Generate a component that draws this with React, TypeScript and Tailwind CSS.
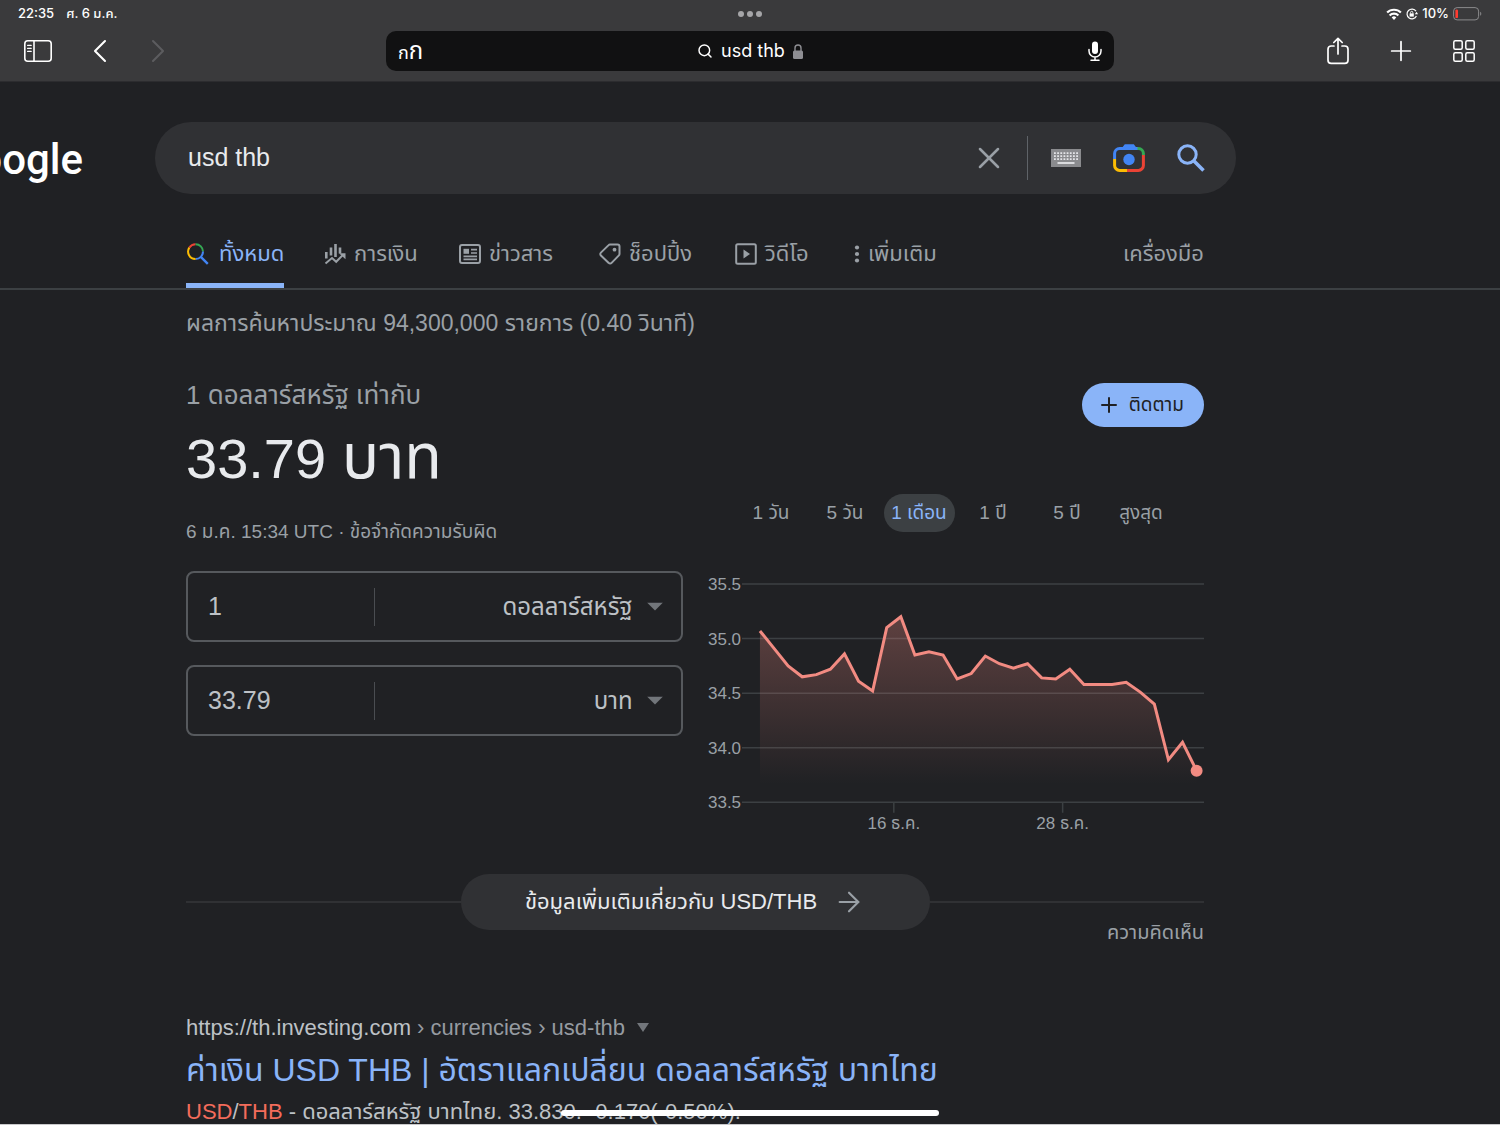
import { ArrowRight, ChevronLeft, ChevronRight, Plus, Search, X } from "lucide-react";
import type { ReactNode } from "react";

const rates = [
  35.07, 34.91, 34.75, 34.65, 34.67, 34.72, 34.86, 34.61, 34.52, 35.1, 35.2,
  34.85, 34.88, 34.85, 34.63, 34.68, 34.84, 34.77, 34.73, 34.77, 34.64, 34.63,
  34.72, 34.58, 34.58, 34.58, 34.6, 34.51, 34.4, 33.89, 34.05, 33.79,
];

const ticks = [35.5, 35, 34.5, 34, 33.5];

const dates = [
  { x: 186, label: "16 ธ.ค." },
  { x: 355, label: "28 ธ.ค." },
];

const periods = ["1 วัน", "5 วัน", "1 เดือน", "1 ปี", "5 ปี", "สูงสุด"];

function SidebarIcon() {
  return (
    <svg width="28" height="22" viewBox="0 0 28 22" fill="none" stroke="currentColor" strokeWidth="1.6">
      <rect x="0.8" y="0.8" width="26.4" height="20.4" rx="3" />
      <path d="M10 1v20" />
      <path d="M3.6 5.4h3.6M3.6 8.4h3.6M3.6 11.4h3.6" strokeWidth="1.2" strokeLinecap="round" />
    </svg>
  );
}

function ShareIcon() {
  return (
    <svg width="22" height="28" viewBox="0 0 22 28" fill="none" stroke="currentColor" strokeWidth="1.7" strokeLinecap="round" strokeLinejoin="round">
      <path d="M7 9H4.2A3.2 3.2 0 0 0 1 12.2v11a3.2 3.2 0 0 0 3.2 3.2h13.6a3.2 3.2 0 0 0 3.2-3.2v-11A3.2 3.2 0 0 0 17.8 9H15" />
      <path d="M11 17V1.5M6.8 5.5 11 1.3l4.2 4.2" />
    </svg>
  );
}

function TabsIcon() {
  return (
    <svg width="22" height="22" viewBox="0 0 22 22" fill="none" stroke="currentColor" strokeWidth="1.5">
      <rect x="0.8" y="0.8" width="8.4" height="8.4" rx="1.5" />
      <rect x="12.8" y="0.8" width="8.4" height="8.4" rx="1.5" />
      <rect x="0.8" y="12.8" width="8.4" height="8.4" rx="1.5" />
      <rect x="12.8" y="12.8" width="8.4" height="8.4" rx="1.5" />
    </svg>
  );
}

function MicIcon() {
  return (
    <svg width="14" height="20" viewBox="0 0 14 20" fill="none" stroke="currentColor" strokeWidth="1.5" strokeLinecap="round">
      <rect x="4" y="0.5" width="6" height="12.5" rx="3" fill="currentColor" stroke="none" />
      <path d="M1 8.5v1.5a6 6 0 0 0 12 0V8.5M7 16v3M3 19.2h8" />
    </svg>
  );
}

function LockIcon() {
  return (
    <svg width="10" height="15" viewBox="0 0 10 15" className="text-[#8e8e93]">
      <rect x="0" y="6.5" width="10" height="8.5" rx="1.5" fill="currentColor" />
      <path d="M2 7V4a3 3 0 0 1 6 0v3" fill="none" stroke="currentColor" strokeWidth="1.4" />
    </svg>
  );
}

function StatusIcons() {
  return (
    <>
      <svg width="16" height="12" viewBox="0 0 14 11" fill="none" stroke="currentColor" strokeWidth="2">
        <path d="M0.7 4.2a9 9 0 0 1 12.6 0M3 6.8a5.7 5.7 0 0 1 8 0" />
        <path d="M7 11 4.9 8.7a3 3 0 0 1 4.2 0z" fill="currentColor" stroke="none" />
      </svg>
      <svg width="12" height="12" viewBox="0 0 12 12" fill="none" stroke="currentColor" strokeWidth="1.2">
        <path d="M10 3.2A4.9 4.9 0 1 0 10.4 8" />
        <path d="M8.8 6.2h3.2l-1.4-2.4z" fill="currentColor" stroke="none" />
        <rect x="3.6" y="5.4" width="4.2" height="3.2" fill="currentColor" stroke="none" />
        <path d="M4.6 5.6V4.4a1.1 1.1 0 0 1 2.2 0v1.2" strokeWidth="0.9" />
      </svg>
    </>
  );
}

function BatteryIcon() {
  return (
    <svg width="29" height="14" viewBox="0 0 29 14" fill="none">
      <rect x="0.6" y="0.6" width="25" height="12.3" rx="3.5" stroke="#8b8b8d" />
      <rect x="2.4" y="2.4" width="2.6" height="8.7" rx="1.2" fill="#ff3b30" />
      <path d="M27.2 4.8c1.5.7 1.5 3.3 0 4z" fill="#8b8b8d" />
    </svg>
  );
}

function KeyboardIcon() {
  return (
    <svg width="30" height="18" viewBox="0 0 30 18">
      <rect width="30" height="18" fill="#8a8b8e" />
      <path d="M3 4.2h24M3 7.2h24M3 10.2h24" stroke="#e4e5e8" strokeWidth="1.7" strokeDasharray="1.8 1.37" />
      <path d="M6.5 14h17" stroke="#e4e5e8" strokeWidth="1.8" />
    </svg>
  );
}

function LensIcon() {
  return (
    <svg width="32" height="28" viewBox="0 0 32 28" fill="none" strokeWidth="3">
      <path d="M1.6 15V9.5a5 5 0 0 1 5-5H25" stroke="#4285f4" />
      <path d="M8.5 4.5 11.8.3h9L24 4.5v1.5H8.5z" fill="#4285f4" />
      <path d="M24.5 4.5h.9a5 5 0 0 1 5 5V11" stroke="#34a853" />
      <path d="M30.4 11v10.4a5 5 0 0 1-5 5H13" stroke="#ea4335" />
      <path d="M1.6 15v6.4a5 5 0 0 0 5 5H14" stroke="#fbbc04" />
      <circle cx="16" cy="15.5" r="5.7" fill="#4285f4" />
    </svg>
  );
}

function GoogleSearchIcon() {
  return (
    <svg width="28" height="28" viewBox="0 0 28 28" fill="none" stroke="#8ab4f8">
      <circle cx="10.5" cy="10.5" r="8.7" strokeWidth="3" />
      <path d="m17 17 9.5 9.5" strokeWidth="3.6" />
    </svg>
  );
}

function ColorSearchIcon() {
  return (
    <svg width="22" height="22" viewBox="0 0 22 22" fill="none" strokeWidth="2">
      <path d="M2.3 4.6A7.4 7.4 0 0 1 8.6 1.2" stroke="#ea4335" />
      <path d="M8.6 1.2a7.4 7.4 0 0 1 7.4 7.4" stroke="#34a853" />
      <path d="M16 8.6A7.4 7.4 0 0 1 8.6 16" stroke="#4285f4" />
      <path d="M8.6 16A7.4 7.4 0 0 1 2.3 4.6" stroke="#fbbc04" />
      <path d="m13.8 13.8 7 7" stroke="#4285f4" strokeWidth="2.4" />
    </svg>
  );
}

function FinanceIcon() {
  return (
    <svg width="22" height="22" viewBox="0 0 22 22" fill="none" stroke="currentColor" strokeWidth="2">
      <path d="M2.3 9v6.5M7 4.5v8M11.5 1v13M16 4.5v6" strokeWidth="2.6" />
      <path d="M1.5 20.5 8 15l4.2 3.8 7-7.2" />
      <path d="M15 10.3h6.5v6z" fill="currentColor" stroke="none" />
    </svg>
  );
}

function NewsIcon() {
  return (
    <svg width="22" height="20" viewBox="0 0 22 20" fill="none" stroke="currentColor" strokeWidth="2">
      <rect x="1" y="1" width="20" height="18" rx="2" />
      <rect x="4.5" y="4.8" width="5.5" height="5" fill="currentColor" stroke="none" />
      <path d="M12 5.7h6M12 9h6M4.5 12.4H18M4.5 15.4H18" strokeWidth="1.7" />
    </svg>
  );
}

function TagIcon() {
  return (
    <svg width="22" height="22" viewBox="0 0 22 22" fill="none" stroke="currentColor" strokeWidth="2">
      <path d="M11 1.5h7.5a2 2 0 0 1 2 2V11a2 2 0 0 1-.6 1.4l-7.3 7.5a2 2 0 0 1-2.9 0l-7.8-7.4a2 2 0 0 1 0-2.9l7.7-7.5A2 2 0 0 1 11 1.5z" />
      <circle cx="15.5" cy="6.7" r="1.9" fill="currentColor" stroke="none" />
    </svg>
  );
}

function VideoIcon() {
  return (
    <svg width="22" height="22" viewBox="0 0 22 22" fill="none" stroke="currentColor" strokeWidth="2">
      <rect x="1.2" y="1.2" width="19.6" height="19.6" rx="1.5" />
      <path d="M8.5 6.5v9l6.5-4.5z" fill="currentColor" stroke="none" />
    </svg>
  );
}

function MoreIcon() {
  return (
    <svg width="6" height="18" viewBox="0 0 6 18" fill="currentColor">
      <circle cx="3" cy="2.5" r="2.1" />
      <circle cx="3" cy="9" r="2.1" />
      <circle cx="3" cy="15.5" r="2.1" />
    </svg>
  );
}

function Caret({ className }: { className: string }) {
  return (
    <svg viewBox="0 0 16 10" preserveAspectRatio="none" className={className} fill="currentColor">
      <path d="M0 0h16L8 9z" />
    </svg>
  );
}

function BrowserBar() {
  return (
    <header className="h-[82px] shrink-0 border-b border-[#2c2c2f] bg-[#3a3a3c] text-white">
      <div className="grid h-7 grid-cols-3 items-center px-[18px] font-[Inter,'Noto_Sans_Thai',sans-serif] text-[13px] font-medium">
        <div className="flex gap-3">
          <span>22:35</span>
          <span>ศ. 6 ม.ค.</span>
        </div>
        <div className="flex justify-center gap-[3px]">
          <span className="size-1.5 rounded-full bg-[#a5a5a8]" />
          <span className="size-1.5 rounded-full bg-[#a5a5a8]" />
          <span className="size-1.5 rounded-full bg-[#a5a5a8]" />
        </div>
        <div className="flex items-center justify-end gap-1">
          <StatusIcons />
          <span>10%</span>
          <BatteryIcon />
        </div>
      </div>

      <div className="grid grid-cols-[1fr_minmax(0,728px)_1fr] items-center pt-[3px]">
        <div className="flex items-center pl-6">
          <button type="button" aria-label="Sidebar">
            <SidebarIcon />
          </button>
          <button type="button" aria-label="Back" className="ml-7">
            <ChevronLeft className="size-10" strokeWidth={1.25} />
          </button>
          <button type="button" aria-label="Forward" className="ml-[18px] text-[#5c5c5f]" disabled>
            <ChevronRight className="size-10" strokeWidth={1.25} />
          </button>
        </div>

        <div className="grid h-10 grid-cols-[1fr_auto_1fr] items-center rounded-[10px] bg-[#111112] px-3">
          <button type="button" className="justify-self-start text-lg">
            ก<span className="text-2xl">ก</span>
          </button>
          <button type="button" className="flex items-center gap-2 font-[Inter,sans-serif] text-lg">
            <Search className="size-4" strokeWidth={2.2} />
            usd thb
            <LockIcon />
          </button>
          <button type="button" aria-label="Dictate" className="justify-self-end">
            <MicIcon />
          </button>
        </div>

        <div className="flex items-center justify-end gap-9 pr-[25px]">
          <button type="button" aria-label="Share">
            <ShareIcon />
          </button>
          <button type="button" aria-label="New tab">
            <Plus className="size-8" strokeWidth={1.3} />
          </button>
          <button type="button" aria-label="Tabs">
            <TabsIcon />
          </button>
        </div>
      </div>
    </header>
  );
}

function SearchBar() {
  return (
    <div className="flex h-[72px] items-center">
      <a
        href="#"
        className="flex w-[83px] shrink-0 justify-end overflow-hidden pt-1 font-[Roboto,sans-serif] text-[42px] leading-[60px] font-medium text-white"
      >
        Google
      </a>
      <form className="ml-[72px] flex h-full w-full max-w-[1081px] items-center rounded-full bg-[#303134] pr-[31px] pl-[33px]">
        <input
          aria-label="ค้นหา"
          defaultValue="usd thb"
          className="min-w-0 flex-1 bg-transparent text-[25px] text-[#e8eaed] outline-none"
        />
        <button type="reset" aria-label="ล้าง" className="text-[#9aa0a6]">
          <X className="size-9" strokeWidth={1.7} />
        </button>
        <span className="ml-5 h-11 w-px bg-[#5f6368]" />
        <button type="button" aria-label="แป้นพิมพ์" className="ml-[23px]">
          <KeyboardIcon />
        </button>
        <button type="button" aria-label="ค้นหาด้วยภาพ" className="ml-8">
          <LensIcon />
        </button>
        <button type="submit" aria-label="ค้นหา" className="ml-8">
          <GoogleSearchIcon />
        </button>
      </form>
    </div>
  );
}

function Tab({ icon, active, children }: { icon: ReactNode; active?: boolean; children: ReactNode }) {
  return (
    <a
      href="#"
      className={
        active
          ? "flex h-16 items-center gap-2.5 justify-self-start border-b-[5px] border-[#8ab4f8] pl-px text-[#8ab4f8]"
          : "flex h-16 items-center gap-2 border-b-[5px] border-transparent"
      }
    >
      {icon}
      {children}
    </a>
  );
}

function Nav() {
  return (
    <nav className="mt-[30px] border-b-2 border-[#3c4043] text-[#9aa0a6]">
      <div className="ml-[186px] flex max-w-[1018px] justify-between text-[22px] whitespace-nowrap">
        <div className="grid grid-cols-[138px_135px_140px_136px_119px_auto]">
          <Tab icon={<ColorSearchIcon />} active>
            ทั้งหมด
          </Tab>
          <Tab icon={<FinanceIcon />}>การเงิน</Tab>
          <Tab icon={<NewsIcon />}>ข่าวสาร</Tab>
          <Tab icon={<TagIcon />}>ช็อปปิ้ง</Tab>
          <Tab icon={<VideoIcon />}>วิดีโอ</Tab>
          <Tab icon={<MoreIcon />}>เพิ่มเติม</Tab>
        </div>
        <button type="button" className="h-16 border-b-[5px] border-transparent">
          เครื่องมือ
        </button>
      </div>
    </nav>
  );
}

function CurrencyField({ amount, currency, label }: { amount: string; currency: string; label: string }) {
  return (
    <div className="flex h-[71px] items-center rounded-lg border-2 border-[#56595d] text-2xl text-[#bdc1c6]">
      <input
        aria-label={`จำนวน ${label}`}
        defaultValue={amount}
        className="w-[186px] min-w-0 bg-transparent pl-5 text-[25px] outline-none"
      />
      <span className="h-[38px] w-px shrink-0 bg-[#4a4d51]" />
      <div className="relative h-full flex-1">
        <select
          aria-label={`สกุลเงิน ${label}`}
          defaultValue={currency}
          className="h-full w-full appearance-none bg-transparent pr-12 text-right [text-align-last:right] outline-none"
        >
          <option>ดอลลาร์สหรัฐ</option>
          <option>บาท</option>
        </select>
        <Caret className="pointer-events-none absolute top-1/2 right-[18px] h-[9px] w-4 -translate-y-1/2 text-[#72767b]" />
      </div>
    </div>
  );
}

function RateChart() {
  const toX = (i: number) => 52 + i * 14.1;
  const toY = (rate: number) => 10 + (35.5 - rate) * 109.3;
  const line = rates.map((rate, i) => `${toX(i)},${toY(rate)}`).join(" ");
  const last = rates.length - 1;

  return (
    <svg viewBox="0 0 497 262" className="w-full text-[17px]" role="img" aria-label="USD/THB">
      <defs>
        <linearGradient id="fill" x1="0" y1="0" x2="0" y2="1">
          <stop offset="0" stopColor="#f28b82" stopOpacity="0.3" />
          <stop offset="1" stopColor="#f28b82" stopOpacity="0" />
        </linearGradient>
      </defs>
      {ticks.map((tick) => (
        <g key={tick}>
          <path d={`M34 ${toY(tick)}h463`} stroke="#3c4043" strokeWidth="1.5" />
          <text x="0" y={toY(tick) + 6} fill="#9aa0a6">
            {tick.toFixed(1)}
          </text>
        </g>
      ))}
      {dates.map(({ x, label }) => (
        <g key={label}>
          <path d={`M${x} 229v10`} stroke="#3c4043" strokeWidth="1.5" />
          <text x={x} y="255" fill="#9aa0a6" textAnchor="middle">
            {label}
          </text>
        </g>
      ))}
      <polygon points={`${toX(0)},210 ${line} ${toX(last)},210`} fill="url(#fill)" />
      <polyline points={line} fill="none" stroke="#f28b82" strokeWidth="3" />
      <circle cx={toX(last)} cy={toY(rates[last])} r="6" fill="#f28b82" />
    </svg>
  );
}

function Converter() {
  return (
    <section className="mt-10 text-[#9aa0a6]">
      <div className="flex items-start justify-between">
        <div>
          <p className="text-[26px] leading-8">1 ดอลลาร์สหรัฐ เท่ากับ</p>
          <p className="mt-2.5 text-[56px] leading-[71px] text-[#e8eaed]">
            33.79 <span className="text-[62px]">บาท</span>
          </p>
        </div>
        <button
          type="button"
          className="mt-1 flex h-11 items-center gap-2 rounded-full bg-[#8ab4f8] pr-5 pl-[15px] text-[19px] text-[#202124]"
        >
          <Plus className="size-6" strokeWidth={2} />
          ติดตาม
        </button>
      </div>

      <div className="grid grid-cols-2 gap-[25px]">
        <div>
          <p className="mt-6 text-[19px] leading-7">
            6 ม.ค. 15:34 UTC · <a href="#">ข้อจำกัดความรับผิด</a>
          </p>
          <div className="mt-[25px] flex flex-col gap-[23px]">
            <CurrencyField amount="1" currency="ดอลลาร์สหรัฐ" label="USD" />
            <CurrencyField amount="33.79" currency="บาท" label="THB" />
          </div>
        </div>
        <div>
          <div className="ml-7 flex gap-[3px] text-[19px]">
            {periods.map((period) => (
              <button
                key={period}
                type="button"
                className={
                  period === "1 เดือน"
                    ? "h-[38px] w-[71px] rounded-full bg-[#3c4043] text-[#8ab4f8]"
                    : "h-[38px] w-[71px]"
                }
              >
                {period}
              </button>
            ))}
          </div>
          <div className="mt-[42px]">
            <RateChart />
          </div>
        </div>
      </div>

      <div className="mt-[38px] flex items-center">
        <span className="h-0.5 flex-1 bg-[#303134]" />
        <a
          href="#"
          className="flex h-14 w-[469px] items-center justify-center gap-4 rounded-full bg-[#303134] text-[22px] text-[#e8eaed]"
        >
          ข้อมูลเพิ่มเติมเกี่ยวกับ USD/THB
          <ArrowRight className="size-8 text-[#9aa0a6]" strokeWidth={1.6} />
        </a>
        <span className="h-0.5 flex-1 bg-[#303134]" />
      </div>
      <div className="flex justify-end text-[20px] leading-7">
        <a href="#" className="-mt-3">
          ความคิดเห็น
        </a>
      </div>
    </section>
  );
}

function Result() {
  return (
    <article className="mt-[66px] whitespace-nowrap">
      <div className="flex items-center text-[22px] leading-8 text-[#bdc1c6]">
        <cite className="not-italic">
          https://th.investing.com<span className="text-[#969ba1]"> › currencies › usd-thb</span>
        </cite>
        <button type="button" aria-label="เพิ่มเติม" className="ml-3 text-[#72767b]">
          <Caret className="h-2.5 w-3" />
        </button>
      </div>
      <h3 className="mt-1.5 text-[32px] leading-10 text-[#8ab4f8]">
        <a href="#">ค่าเงิน USD THB | อัตราแลกเปลี่ยน ดอลลาร์สหรัฐ บาทไทย</a>
      </h3>
      <p className="mt-1.5 text-[22px] leading-8 text-[#bdc1c6]">
        <em className="text-[#f36c5b] not-italic">USD</em>/<em className="text-[#f36c5b] not-italic">THB</em> - ดอลลาร์สหรัฐ
        บาทไทย. 33.830. -0.170(-0.50%).
      </p>
    </article>
  );
}

export default function App() {
  return (
    <div className="relative flex h-screen flex-col overflow-hidden border-b border-[#c9c9cb] bg-[#202124] font-['Liberation_Sans','Noto_Sans_Thai',sans-serif]">
      <BrowserBar />
      <main className="pt-10">
        <SearchBar />
        <Nav />
        <div className="ml-[186px] max-w-[1018px]">
          <p className="mt-[17px] text-[23px] leading-8 text-[#9aa0a6]">
            ผลการค้นหาประมาณ 94,300,000 รายการ (0.40 วินาที)
          </p>
          <Converter />
          <Result />
        </div>
      </main>
      <div className="absolute bottom-2 left-1/2 h-1.5 w-[378px] -translate-x-1/2 rounded-full bg-white" />
    </div>
  );
}
